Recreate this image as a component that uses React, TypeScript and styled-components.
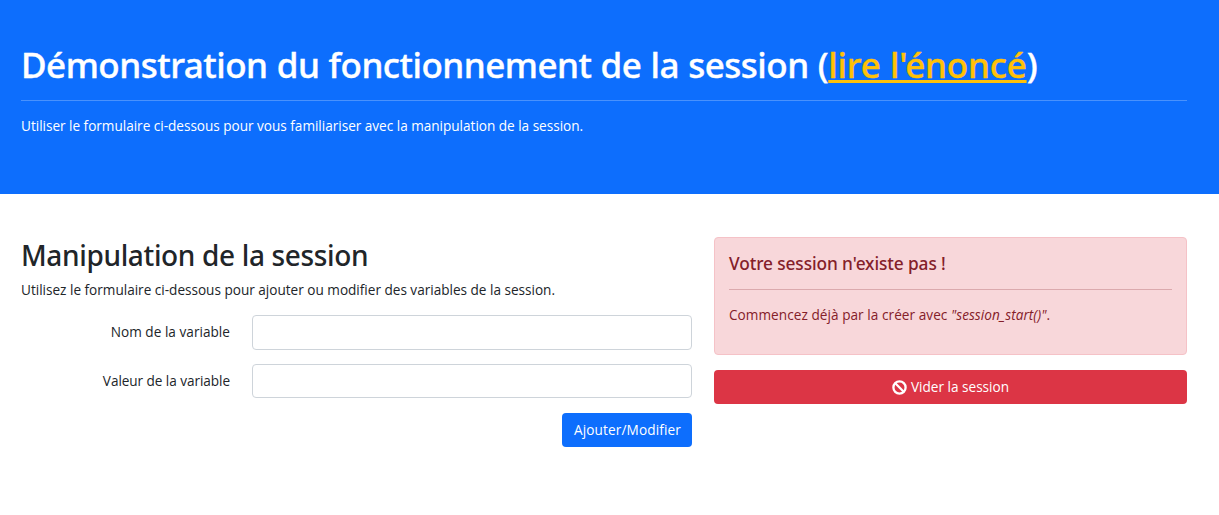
import React from "react";
import styled, { createGlobalStyle } from "styled-components";

const GlobalStyle = createGlobalStyle`
  * { box-sizing: border-box; }
  body {
    margin: 0;
    background: #fff;
    color: #212529;
    font-family: "Open Sans", "Noto Sans", sans-serif;
    font-size: 13.6px;
    line-height: 22px;
  }
  h1, h2, h4, p, hr { margin: 0; }
`;

const Banner = styled.header`
  height: 194px;
  padding: 43px 32px 0 21px;
  background: #0d6efd;
  color: #fff;
`;

const Title = styled.h1`
  font-family: "Noto Sans", sans-serif;
  font-size: 35px;
  font-weight: 500;
  line-height: 43px;
  letter-spacing: -0.485px;
  word-spacing: 0.5px;
  white-space: nowrap;
  -webkit-text-stroke: 0.4px currentColor;
`;

const TitleLink = styled.a`
  color: #ffc107;
  letter-spacing: -0.2px;
  text-decoration: underline;
  text-decoration-thickness: 3px;
  text-underline-offset: 2px;
  text-decoration-skip-ink: none;
`;

const Divider = styled.hr<{ $gapTop: number; $gapBottom: number }>`
  height: 1px;
  border: 0;
  color: inherit;
  background: currentColor;
  opacity: 0.25;
  margin: ${(p) => p.$gapTop}px 0 ${(p) => p.$gapBottom}px;
`;

const Text = styled.p<{ $spacing?: number }>`
  letter-spacing: ${(p) => p.$spacing ?? 0}px;
  white-space: nowrap;
`;

const Content = styled.main`
  display: grid;
  grid-template-columns: 671px 473px;
  column-gap: 22px;
  align-items: start;
  padding: 43px 32px 0 21px;
`;

const SectionTitle = styled.h2`
  padding-top: 1px;
  margin-bottom: 6px;
  font-family: "Noto Sans", sans-serif;
  font-size: 28px;
  font-weight: 500;
  line-height: 35px;
  letter-spacing: -0.35px;
`;

const Form = styled.form`
  display: flex;
  flex-direction: column;
  gap: 14px;
  margin-top: 14px;
`;

const Field = styled.div<{ $height: number }>`
  display: grid;
  grid-template-columns: 209px 440px;
  column-gap: 22px;
  align-items: stretch;
  height: ${(p) => p.$height}px;
`;

const Label = styled.label<{ $spacing: number }>`
  padding-top: 6px;
  text-align: right;
  letter-spacing: ${(p) => p.$spacing}px;
`;

const Input = styled.input`
  width: 100%;
  padding: 5px 11px;
  border: 1px solid #ced4da;
  border-radius: 4px;
  background: #fff;
  font: inherit;
  outline: none;
`;

const Button = styled.button<{ $color: string; $width: string; $spacing?: number }>`
  display: flex;
  align-items: center;
  justify-content: center;
  align-self: flex-end;
  gap: 4px;
  width: ${(p) => p.$width};
  height: 34px;
  padding: 0;
  border: 0;
  border-radius: 4px;
  background: ${(p) => p.$color};
  color: #fff;
  font: inherit;
  letter-spacing: ${(p) => p.$spacing ?? 0}px;
`;

const SubmitButton = styled(Button)`
  margin-top: 1px;
  padding-left: 1px;
`;

const Aside = styled.aside`
  display: flex;
  flex-direction: column;
  gap: 15px;
`;

const Alert = styled.div`
  height: 118px;
  padding: 15px 14px 0;
  border: 1px solid #f5c2c7;
  border-radius: 4px;
  background: #f8d7da;
  color: #842029;
`;

const AlertTitle = styled.h4`
  font-family: "Noto Sans", sans-serif;
  font-size: 17.3px;
  font-weight: 500;
  line-height: 22px;
  letter-spacing: -0.1px;
`;

const BanIcon = () => (
  <svg width="15" height="15" viewBox="0 0 15 15" fill="none" stroke="currentColor" strokeWidth="2.3">
    <circle cx="7.5" cy="7.5" r="6.1" />
    <path d="M3.3 3.3 11.7 11.7" />
  </svg>
);

export default function App() {
  return (
    <>
      <GlobalStyle />
      <Banner>
        <Title>
          Démonstration du fonctionnement de la session (<TitleLink href="#">lire l'énoncé</TitleLink>)
        </Title>
        <Divider $gapTop={14} $gapBottom={14} />
        <Text $spacing={-0.02}>
          Utiliser le formulaire ci-dessous pour vous familiariser avec la manipulation de la session.
        </Text>
      </Banner>
      <Content>
        <section>
          <SectionTitle>Manipulation de la session</SectionTitle>
          <Text $spacing={-0.01}>
            Utilisez le formulaire ci-dessous pour ajouter ou modifier des variables de la session.
          </Text>
          <Form>
            <Field $height={35}>
              <Label htmlFor="name" $spacing={0.03}>Nom de la variable</Label>
              <Input id="name" />
            </Field>
            <Field $height={34}>
              <Label htmlFor="value" $spacing={-0.06}>Valeur de la variable</Label>
              <Input id="value" />
            </Field>
            <SubmitButton type="button" $color="#0d6efd" $width="130px" $spacing={0.13}>
              Ajouter/Modifier
            </SubmitButton>
          </Form>
        </section>
        <Aside>
          <Alert>
            <AlertTitle>Votre session n'existe pas !</AlertTitle>
            <Divider $gapTop={14} $gapBottom={14} />
            <Text $spacing={0.05}>
              Commencez déjà par la créer avec <em>"session_start()"</em>.
            </Text>
          </Alert>
          <Button type="button" $color="#dc3545" $width="100%">
            <BanIcon />
            Vider la session
          </Button>
        </Aside>
      </Content>
    </>
  );
}
